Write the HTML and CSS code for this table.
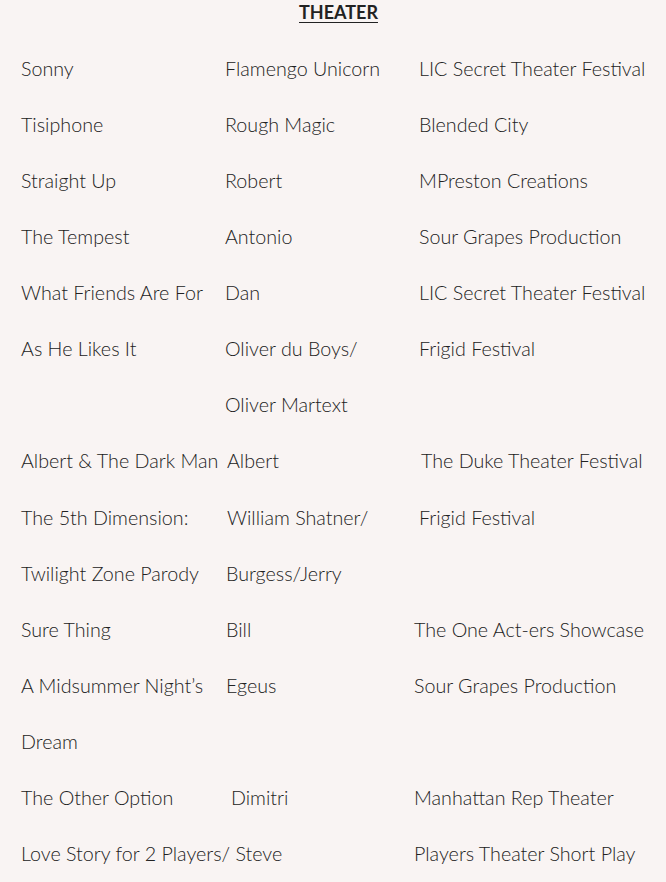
FILE: index.html
```html
<!DOCTYPE html>
<html>
<head>
<meta charset="utf-8">
<link rel="stylesheet" href="styles.css">
</head>
<body>
<section class="credits">
  <h2 class="title">THEATER</h2>
  <div class="grid">
    <div>Sonny</div><div>Flamengo Unicorn</div><div>LIC Secret Theater Festival</div>
    <div>Tisiphone</div><div>Rough Magic</div><div>Blended City</div>
    <div>Straight Up</div><div>Robert</div><div>MPreston Creations</div>
    <div>The Tempest</div><div>Antonio</div><div>Sour Grapes Production</div>
    <div>What Friends Are For</div><div>Dan</div><div>LIC Secret Theater Festival</div>
    <div>As He Likes It</div><div>Oliver du Boys/</div><div>Frigid Festival</div>
    <div></div><div>Oliver Martext</div><div></div>
    <div>Albert &amp; The Dark Man</div><div class="n2">Albert</div><div class="n2">The Duke Theater Festival</div>
    <div>The 5th Dimension:</div><div class="n2">William Shatner/</div><div>Frigid Festival</div>
    <div>Twilight Zone Parody</div><div class="n1">Burgess/Jerry</div><div></div>
    <div>Sure Thing</div><div class="n1">Bill</div><div class="b5">The One Act-ers Showcase</div>
    <div>A Midsummer Night’s</div><div class="n1">Egeus</div><div class="b5">Sour Grapes Production</div>
    <div>Dream</div><div></div><div></div>
    <div>The Other Option</div><div class="n6">Dimitri</div><div class="b5">Manhattan Rep Theater</div>
    <div class="span2">Love Story for 2 Players/ Steve</div><div class="b5">Players Theater Short Play</div>
  </div>
</section>
</body>
</html>
```
FILE: styles.css
```css
html, body {
  margin: 0;
  padding: 0;
  background: #f9f4f3;
}
body {
  font-family: Lato, "Open Sans", sans-serif;
  color: #222222;
  width: 666px;
  height: 882px;
  overflow: hidden;
}
.credits {
  padding: 0 0 0 21px;
}
.title {
  margin: 0;
  height: 40px;
  line-height: 25px;
  font-size: 18px;
  font-weight: 700;
  text-align: center;
  text-decoration: underline;
  text-underline-offset: 3px;
  padding-right: 10px;
  box-sizing: border-box;
}
.grid {
  display: grid;
  grid-template-columns: 204px 194px 1fr;
  grid-auto-rows: 56.14px;
  align-items: center;
  font-size: 19.7px;
  font-weight: 300;
  white-space: nowrap;
}
.n1 { padding-left: 1px; }
.n2 { padding-left: 2px; }
.n6 { padding-left: 6px; }
.b5 { margin-left: -5px; }
.span2 { grid-column: span 2; }
```
